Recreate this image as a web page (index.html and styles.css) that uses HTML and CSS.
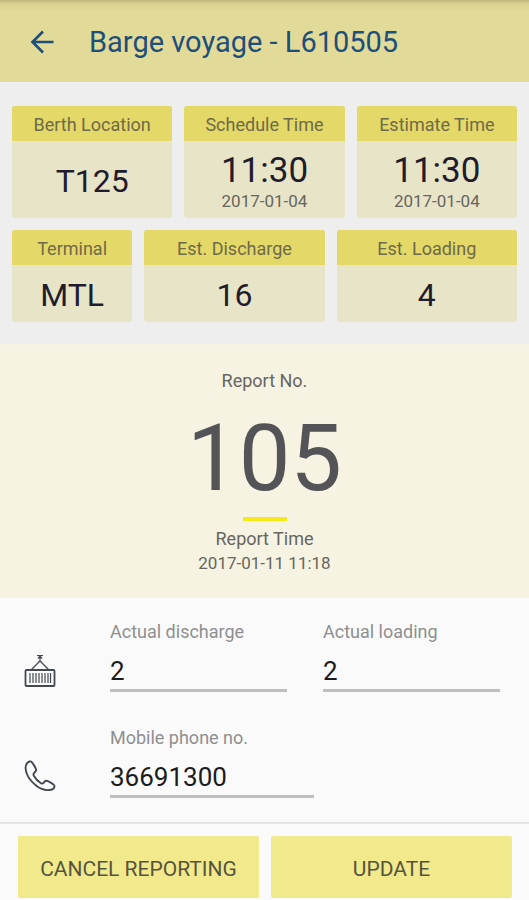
FILE: index.html
```
<!DOCTYPE html>
<html lang="en">
<head>
    <meta charset="UTF-8">
    <meta name="viewport" content="width=device-width, initial-scale=1.0">
    <title>Barge voyage - L610505</title>
    <link rel="stylesheet" href="styles.css">
</head>
<body>
    <header class="app-bar">
        <button type="button" class="back" aria-label="Back">
            <svg width="24" height="24" viewBox="0 0 24 24" fill="none" stroke="currentColor" stroke-width="2.600">
                <path d="M23.500 12H2.500M13 1.500L2.500 12L13 22.500"/>
            </svg>
        </button>
        <h1>Barge voyage - L610505</h1>
    </header>

    <section class="summary">
        <div class="card-row schedule">
            <div class="card">
                <h2>Berth Location</h2>
                <div class="card-body"><span class="value">T125</span></div>
            </div>
            <div class="card">
                <h2>Schedule Time</h2>
                <div class="card-body">
                    <span class="value time">11:30</span>
                    <span class="date">2017-01-04</span>
                </div>
            </div>
            <div class="card">
                <h2>Estimate Time</h2>
                <div class="card-body">
                    <span class="value time">11:30</span>
                    <span class="date">2017-01-04</span>
                </div>
            </div>
        </div>
        <div class="card-row cargo">
            <div class="card">
                <h2>Terminal</h2>
                <div class="card-body"><span class="value">MTL</span></div>
            </div>
            <div class="card">
                <h2>Est. Discharge</h2>
                <div class="card-body"><span class="value">16</span></div>
            </div>
            <div class="card">
                <h2>Est. Loading</h2>
                <div class="card-body"><span class="value">4</span></div>
            </div>
        </div>
    </section>

    <section class="report">
        <div>Report No.</div>
        <div class="report-no">105</div>
        <div class="bar"></div>
        <div>Report Time</div>
        <div class="date">2017-01-11 11:18</div>
    </section>

    <form id="reportForm" class="report-form">
        <div class="form-row">
            <!-- container -->
            <svg class="icon" width="32" height="34" viewBox="0 0 32 34" fill="none" stroke="#44494f">
                <path d="M13 1.500h6M13.500 4h5M14.500 1.500l3 2.500M17.500 1.500l-3 2.500M16 4v3" stroke-width="1.200"/>
                <path d="M14.500 7.500h3M15 8L7.500 15.500M17 8l7.500 7.500" stroke-width="1.300"/>
                <rect x="1.500" y="16" width="29" height="16" rx="1" stroke-width="1.800"/>
                <path d="M6 19v10M9 19v10M12 19v10M15 19v10M18 19v10M21 19v10M24 19v10M26.500 19v10" stroke-width="1.200"/>
            </svg>
            <div class="field">
                <label for="discharge">Actual discharge</label>
                <input type="text" id="discharge" inputmode="numeric" value="2">
            </div>
            <div class="field">
                <label for="loading">Actual loading</label>
                <input type="text" id="loading" inputmode="numeric" value="2">
            </div>
        </div>
        <div class="form-row">
            <!-- phone -->
            <svg class="icon" width="32" height="34" viewBox="0 0 32 34" fill="none" stroke="#44494f" stroke-width="1.900" stroke-linejoin="round">
                <path d="M5.500 1.500C3 2.500 1.300 5 1.600 8.500C2 14.500 6.500 21 12 25.500C16 28.800 21 30.500 25.500 30C28.500 29.700 30.500 28 30.500 26C30.500 24.500 28.500 23.500 26 22.200C23.500 20.600 21.800 20.300 20.600 21.600C19.300 23.500 18.500 24.300 17 23.300C14 21.500 11.500 18.700 9.800 15.700C9 14.200 9.500 13.200 11 12C12.500 10.800 12.500 9.800 11.500 8C10.300 5.500 9 3.500 7.800 2.100C7.200 1.400 6.300 1.200 5.500 1.500Z"/>
            </svg>
            <div class="field phone">
                <label for="mobile">Mobile phone no.</label>
                <input type="tel" id="mobile" value="36691300">
            </div>
        </div>
    </form>

    <footer class="actions">
        <button type="button">CANCEL REPORTING</button>
        <button type="submit" form="reportForm">UPDATE</button>
    </footer>
</body>
</html>
```
FILE: styles.css
```
* {
    box-sizing: border-box;
}
body {
    margin: 0;
    font-family: Roboto, sans-serif;
    font-size: 18px;
    line-height: 24px;
    color: #66665f;
    background: #fafafa;
}
h1, h2 {
    margin: 0;
    font-weight: 400;
}
.app-bar {
    display: flex;
    align-items: center;
    gap: 25px;
    height: 82px;
    padding: 2px 20px 0;
    color: #1d4f7a;
    background: linear-gradient(#bfb67c, #dbd292 4px, #e2da98 12px);
}
.app-bar h1 {
    font-size: 29px;
    line-height: 36px;
}
.back {
    display: flex;
    padding: 10px;
    border: none;
    color: inherit;
    background: none;
    cursor: pointer;
}

/* Voyage cards */
.summary {
    display: grid;
    gap: 12px;
    padding: 24px 12px 22px;
    background: #eeeeee;
}
.card-row {
    display: grid;
    gap: 12px;
}
.schedule {
    grid-template-columns: repeat(3, 1fr);
}
.cargo {
    grid-template-columns: 2fr 3fr 3fr;
}
.card {
    display: flex;
    flex-direction: column;
    border-radius: 3px;
    overflow: hidden;
    text-align: center;
    background: #e8e4c8;
}
.card h2 {
    padding: 7px 0 4px;
    font-size: 18px;
    line-height: 24px;
    color: #6f6a48;
    background: #e3d868;
}
.card-body {
    display: flex;
    flex: 1;
    flex-direction: column;
    justify-content: center;
    padding: 10px 0 7px;
}
.value {
    font-size: 32px;
    line-height: 40px;
    color: #1f1c2c;
}
.time {
    font-size: 35px;
}
.date {
    font-size: 17px;
}
.card .date {
    line-height: 20px;
}

/* Report number */
.report {
    padding: 25px 12px 23px;
    text-align: center;
    background: #f6f3e2;
}
.report-no {
    padding: 16px 0 8px;
    font-size: 92px;
    line-height: 100px;
    color: #545458;
}
.bar {
    width: 44px;
    height: 4px;
    margin: 0 auto 6px;
    background: #f8e71c;
}

/* Form */
.report-form {
    display: grid;
    gap: 34px;
    padding: 22px 29px 24px 24px;
}
.form-row {
    display: flex;
    gap: 36px;
}
.icon {
    align-self: flex-end;
    margin: 0 18px 4px 0;
}
.field {
    display: flex;
    flex: 1;
    flex-direction: column;
    min-width: 0;
}
.phone {
    flex: none;
    width: 204px;
}
.field label {
    color: #8f8f8f;
}
.field input {
    width: 100%;
    height: 48px;
    padding: 8px 0 0;
    border: none;
    border-bottom: 3px solid #bebebe;
    font: 26px Roboto, sans-serif;
    color: #1c1c1c;
    background: none;
    outline: none;
}

/* Buttons */
.actions {
    display: flex;
    gap: 12px;
    padding: 12px 17px 2px 18px;
    border-top: 2px solid #e5e5e5;
}
.actions button {
    flex: 1;
    height: 62px;
    padding: 4px 0 0;
    border: none;
    border-radius: 2px;
    font: 21px Roboto, sans-serif;
    color: #55553f;
    background: #f2e88c;
    cursor: pointer;
}
```
